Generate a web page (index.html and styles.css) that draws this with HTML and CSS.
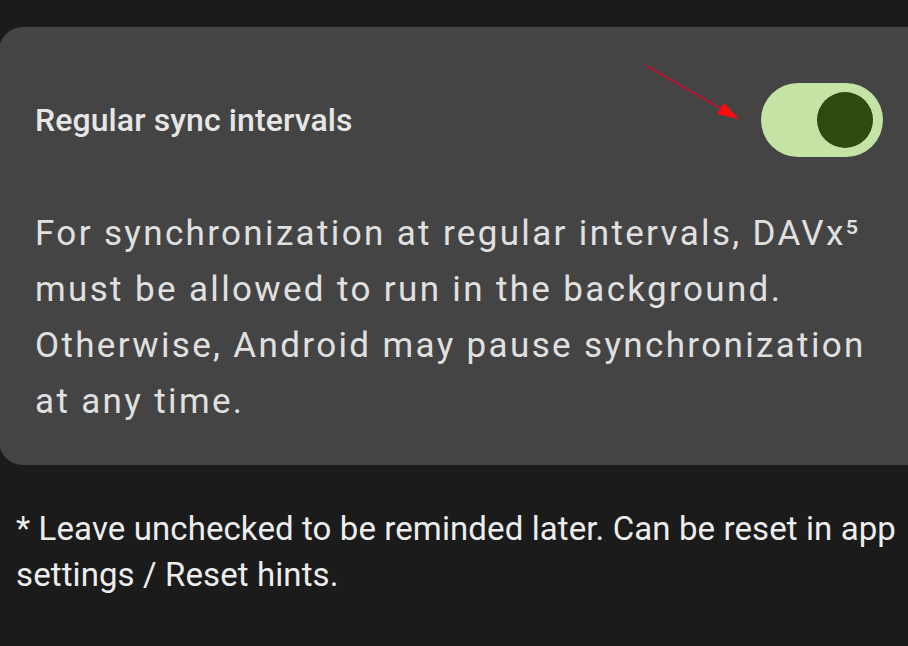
FILE: index.html
```html
<!DOCTYPE html>
<html>
<head>
<meta charset="utf-8">
<link rel="stylesheet" href="styles.css">
</head>
<body>
<div class="screen">
  <section class="card">
    <div class="row">
      <span class="title">Regular sync intervals</span>
      <div class="switch"><div class="thumb"></div></div>
    </div>
    <p class="desc">For synchronization at regular intervals, DAVx⁵ must be allowed to run in the background. Otherwise, Android may pause synchronization at any time.</p>
    <svg class="arrow" width="110" height="70" viewBox="0 0 110 70">
      <line x1="2" y1="1" x2="82" y2="47" stroke="#c8102e" stroke-width="1.6"/>
      <polygon points="94,54 72,49 79,38" fill="#ff0a0a"/>
    </svg>
  </section>
  <p class="note">* Leave unchecked to be reminded later. Can be reset in app settings / Reset hints.</p>
</div>
</body>
</html>
```
FILE: styles.css
```css
html, body {
  margin: 0;
  padding: 0;
  background: #1b1b1b;
}
.screen {
  width: 908px;
  height: 646px;
  overflow: hidden;
  font-family: Roboto, "Noto Sans", sans-serif;
  padding-top: 27px;
  box-sizing: border-box;
}
.card {
  position: relative;
  margin-left: -1px;
  width: 940px;
  box-sizing: border-box;
  background: #444444;
  border-radius: 24px;
  padding: 56px 0 35px 36px;
}
.row {
  display: flex;
  align-items: center;
  width: 848px;
}
.title {
  flex: 1;
  color: #e6e6e6;
  font-size: 32px;
  font-weight: 500;
  letter-spacing: 0.1px;
}
.switch {
  width: 122px;
  height: 74px;
  border-radius: 37px;
  background: #c4e3a4;
  display: flex;
  align-items: center;
  justify-content: flex-end;
  padding-right: 10px;
  box-sizing: border-box;
}
.thumb {
  width: 56px;
  height: 56px;
  border-radius: 50%;
  background: #2d4a10;
}
.desc {
  margin: 49px 0 0 0;
  width: 850px;
  color: #e0e0e0;
  font-size: 35px;
  line-height: 56px;
  letter-spacing: 2.35px;
}
.arrow {
  position: absolute;
  left: 646px;
  top: 38px;
}
.note {
  margin: 41px 0 0 16px;
  width: 890px;
  color: #ededed;
  font-size: 33px;
  line-height: 46px;
  letter-spacing: 0.1px;
}
```
